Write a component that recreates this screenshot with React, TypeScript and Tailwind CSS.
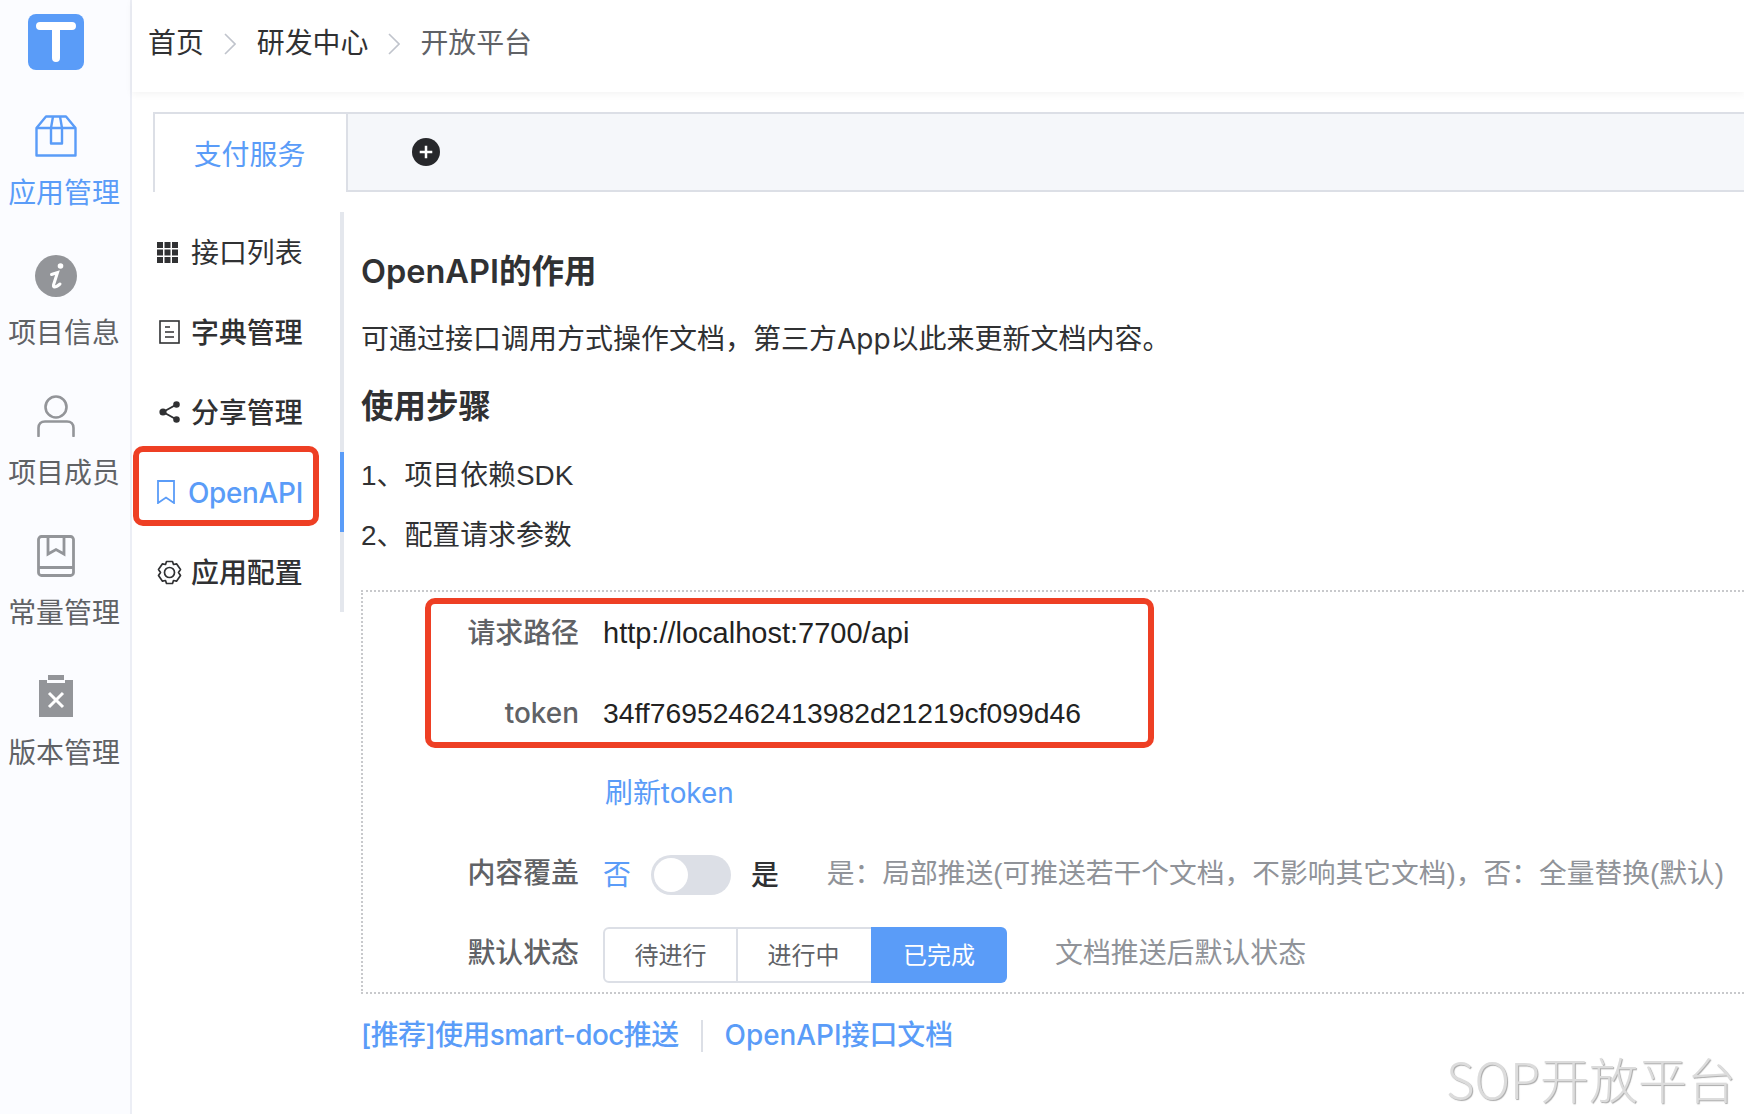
const font = '[font-family:"Inter","Noto_Sans_CJK_SC",sans-serif]';
const plainFont = '[font-family:"Liberation_Sans","Noto_Sans_CJK_SC",sans-serif]';

const BoxIcon = () => (
  <svg width="42" height="42" viewBox="0 0 42 42" fill="none" stroke="#5a9cf8" strokeWidth="2.4">
    <path d="M1.5 13 11 1.5H31L40.5 13V40.5H1.5Z" strokeLinejoin="round" />
    <path d="M1.5 13H40.5M18 1.5 16 13V28.5H27V13L25 1.5" strokeLinejoin="round" />
  </svg>
);

const InfoIcon = () => (
  <svg width="42" height="42" viewBox="0 0 42 42">
    <circle cx="21" cy="21" r="21" fill="#939599" />
    <circle cx="25.5" cy="11" r="2.8" fill="#fff" />
    <path d="M16.5 19.5 22.5 17.5 18.5 30C18 32.5 20 33 25 29" fill="none" stroke="#fff" strokeWidth="3" strokeLinecap="round" />
  </svg>
);

const UserIcon = () => (
  <svg width="38" height="42" viewBox="0 0 38 42" fill="none" stroke="#939599" strokeWidth="2.6">
    <circle cx="19" cy="12" r="10.5" />
    <path d="M1.5 41V33C1.5 29 4 26.5 8 26.5H30C34 26.5 36.5 29 36.5 33V41" strokeLinecap="round" />
  </svg>
);

const BookIcon = () => (
  <svg width="38" height="42" viewBox="0 0 38 42" fill="none" stroke="#939599" strokeWidth="2.8">
    <rect x="1.5" y="1.5" width="35" height="39" rx="3" />
    <path d="M1.5 32.5H36.5" />
    <path d="M11 1.5V19L19 14.5 27 19V1.5" />
  </svg>
);

const ClipIcon = () => (
  <svg width="34" height="42" viewBox="0 0 34 42">
    <path d="M0 5H8V8H26V5H34V42H0Z" fill="#939599" />
    <rect x="9" y="0" width="16" height="5" fill="#939599" />
    <path d="M10 18 24 32M24 18 10 32" stroke="#fff" strokeWidth="3" />
  </svg>
);

const navItems = [
  { label: '应用管理', icon: <BoxIcon />, active: true },
  { label: '项目信息', icon: <InfoIcon />, active: false },
  { label: '项目成员', icon: <UserIcon />, active: false },
  { label: '常量管理', icon: <BookIcon />, active: false },
  { label: '版本管理', icon: <ClipIcon />, active: false },
];

const GridIcon = () => (
  <svg className="-ml-[4px]" width="21" height="21" viewBox="0 0 21 21" fill="#303133">
    {[0, 7.5, 15].flatMap((y) => [0, 7.5, 15].map((x) => <rect key={`${x}-${y}`} x={x} y={y} width="6" height="6" />))}
  </svg>
);

const DocIcon = () => (
  <svg width="21" height="24" viewBox="0 0 21 24" fill="none" stroke="#303133" strokeWidth="1.6">
    <rect x="1" y="1" width="19" height="22" />
    <path d="M6 7H11M6 12H15M6 17H15" />
  </svg>
);

const ShareIcon = () => (
  <svg width="21" height="22" viewBox="0 0 21 22" fill="#303133" stroke="#303133" strokeWidth="2">
    <circle cx="4" cy="11" r="2.6" />
    <circle cx="17.5" cy="3.5" r="2.3" />
    <circle cx="17.5" cy="18.5" r="2.3" />
    <path d="M4 11 17.5 3.5M4 11 17.5 18.5" />
  </svg>
);

const BookmarkIcon = () => (
  <svg width="18" height="24" viewBox="0 0 18 24" fill="none" stroke="#5a9cf8" strokeWidth="1.8">
    <path d="M1 1H17V23L9 17.5 1 23Z" />
  </svg>
);

const GearIcon = () => (
  <svg width="25" height="25" viewBox="0 0 25 25" fill="none" stroke="#303133" strokeWidth="1.7">
    <path d="M9.5 1.5H15.5L16.5 4.5 19.5 3.8 23.5 9.5 21.5 12.5 23.5 15.5 19.5 21.2 16.5 20.5 15.5 23.5H9.5L8.5 20.5 5.5 21.2 1.5 15.5 3.5 12.5 1.5 9.5 5.5 3.8 8.5 4.5Z" strokeLinejoin="round" />
    <circle cx="12.5" cy="12.5" r="5" />
  </svg>
);

const Chevron = ({ className }: { className: string }) => (
  <svg className={className} width="12" height="22" viewBox="0 0 12 22" fill="none" stroke="#c0c4cc" strokeWidth="1.6">
    <path d="M1 1 11 11 1 21" />
  </svg>
);

function MenuRow({ label, icon, weight }: { label: string; icon: React.ReactNode; weight: string }) {
  return (
    <div className={`flex h-[80px] items-center text-[#303133] ${weight}`}>
      <span className="flex w-[38px] justify-center pl-[3px] pr-[9px]">{icon}</span>
      <span className="mt-[3px]">{label}</span>
    </div>
  );
}

function FormRow({ label, children }: { label: string; children: React.ReactNode }) {
  return (
    <div className="flex h-[80px] items-center">
      <div className="mt-[4px] w-[240px] pr-[24px] text-right font-medium text-[#606266]">{label}</div>
      {children}
    </div>
  );
}

export default function App() {
  return (
    <div className={`relative flex h-[1114px] w-[1744px] overflow-hidden bg-white text-[27.9px] ${font}`}>
      <aside className="flex h-full w-[132px] shrink-0 flex-col items-center border-r-[2px] border-[#eceef5] bg-[#fbfcff]">
        <div className="mr-[18px] mt-[14px] h-[56px] w-[56px]">
          <svg width="56" height="56" viewBox="0 0 56 56">
            <rect width="56" height="56" rx="8" fill="#5a9cf8" />
            <path d="M12 12H44M28 12V44" stroke="#fff" strokeWidth="8" strokeLinecap="round" />
          </svg>
        </div>
        <div className="mt-[27px] flex w-full flex-col">
          {navItems.map((item) => (
            <div key={item.label} className="flex h-[140px] flex-col items-center">
              <div className="mr-[19px] mt-[18px] flex h-[42px] items-center justify-center">{item.icon}</div>
              <div className={`mr-[2px] mt-[21px] whitespace-nowrap leading-[30px] ${item.active ? 'text-[#5a9cf8]' : 'text-[#606266]'}`}>
                {item.label}
              </div>
            </div>
          ))}
        </div>
      </aside>

      <div className="flex min-w-0 flex-1 flex-col">
        <header className="flex h-[92px] shrink-0 items-center pb-[4px] pl-[16px] text-[#303133] shadow-[0_2px_8px_rgba(0,0,0,0.05)]">
          <span>首页</span>
          <Chevron className="mx-[20px]" />
          <span className="ml-[1px]">研发中心</span>
          <Chevron className="mx-[20px]" />
          <span className="text-[#606266]">开放平台</span>
        </header>

        <div className="ml-[21px] mt-[20px] flex h-[80px] shrink-0 border-y-[2px] border-[#dcdfe6] bg-[#f5f7fa]">
          <div className="-mb-[2px] flex w-[195px] items-center justify-center border-x-[2px] border-[#dcdfe6] bg-white pr-[2px] text-[#5a9cf8]">
            <span className="mt-[5px]">支付服务</span>
          </div>
          <div className="ml-[64px] flex items-center">
            <svg className="mb-[1px]" width="28" height="28" viewBox="0 0 29 29">
              <circle cx="14.5" cy="14.5" r="14.5" fill="#27282b" />
              <path d="M8 14.5H21M14.5 8V21" stroke="#fff" strokeWidth="2.6" />
            </svg>
          </div>
        </div>

        <div className="ml-[21px] flex flex-1">
          <div className="mt-[20px] h-[400px] w-[191px] shrink-0 border-r-[4px] border-[#e4e7ed]">
            <MenuRow label="接口列表" weight="font-normal" icon={<GridIcon />} />
            <MenuRow label="字典管理" weight="font-medium" icon={<DocIcon />} />
            <MenuRow label="分享管理" weight="font-medium" icon={<ShareIcon />} />
            <div className="relative -mr-[4px] flex h-[80px] items-center border-r-[4px] border-[#5a9cf8] font-medium text-[#5a9cf8]">
              <span className="flex w-[35px] justify-center pl-[1px] pr-[11px]"><BookmarkIcon /></span>
              <span className="mt-[3px] tracking-[-0.3px]">OpenAPI</span>
              <div className="absolute left-[-20px] top-[-6px] h-[80px] w-[186px] rounded-[10px] border-[6px] border-[#ee3f24]" />
            </div>
            <MenuRow label="应用配置" weight="font-medium" icon={<GearIcon />} />
          </div>

          <main className="ml-[17px] min-w-0 flex-1 pt-[19px] text-[#303133]">
            <h2 className="mt-[38px] text-[32.5px] leading-[45px] font-semibold">OpenAPI的作用</h2>
            <p className="mt-[25px] whitespace-nowrap leading-[40px] text-[28px]">可通过接口调用方式操作文档，第三方App以此来更新文档内容。</p>
            <h2 className="mt-[25px] text-[32.5px] leading-[45px] font-semibold">使用步骤</h2>
            <p className={`mt-[27px] leading-[40px] ${plainFont}`}>1、项目依赖SDK</p>
            <p className={`mt-[20px] leading-[40px] ${plainFont}`}>2、配置请求参数</p>

            <div className="relative mt-[34px] h-[404px] border-y-[2px] border-l-[2px] border-dotted border-[#c8c9cc]">
              <FormRow label="请求路径">
                <span className={`mt-[4px] text-[29px] text-[#222] ${plainFont}`}>http://localhost:7700/api</span>
              </FormRow>
              <FormRow label="token">
                <span className={`mt-[3px] text-[28.3px] text-[#222] ${plainFont}`}>34ff76952462413982d21219cf099d46</span>
              </FormRow>
              <FormRow label="">
                <span className="mt-[4px] pl-[2px] text-[#5a9cf8]">刷新token</span>
              </FormRow>
              <FormRow label="内容覆盖">
                <span className="mt-[8px] text-[#5a9cf8]">否</span>
                <span className="ml-[20px] mt-[6px] flex h-[40px] w-[80px] items-center rounded-full bg-[#dcdfe6] pl-[3px]">
                  <span className="h-[34px] w-[34px] rounded-full bg-white" />
                </span>
                <span className="ml-[20px] mt-[8px] font-medium text-[#303133]">是</span>
                <span className={`ml-[48px] mt-[4px] whitespace-nowrap text-[27.75px] text-[#909399] ${plainFont}`}>是：局部推送(可推送若干个文档，不影响其它文档)，否：全量替换(默认)</span>
              </FormRow>
              <FormRow label="默认状态">
                <div className="mt-[6px] flex h-[56px] text-[24px]">
                  <span className="flex w-[135px] items-center justify-center rounded-l-[6px] border-[2px] border-[#dcdfe6] pt-[2px] text-[#606266]">待进行</span>
                  <span className="-ml-[2px] flex w-[135px] items-center justify-center border-y-[2px] border-[#dcdfe6] pt-[2px] text-[#606266]">进行中</span>
                  <span className="flex w-[136px] items-center justify-center rounded-r-[6px] bg-[#5a9cf8] pt-[2px] text-white">已完成</span>
                </div>
                <span className="ml-[48px] mt-[4px] whitespace-nowrap text-[#909399]">文档推送后默认状态</span>
              </FormRow>
              <div className="absolute left-[62px] top-[6px] h-[150px] w-[729px] rounded-[10px] border-[6px] border-[#ee3f24]" />
            </div>

            <div className="mt-[21px] flex items-center font-medium text-[#5a9cf8]">
              <span className="tracking-[-0.55px]">[推荐]使用smart-doc推送</span>
              <span className="mx-[22px] h-[32px] w-[2px] bg-[#dcdfe6]" />
              <span>OpenAPI接口文档</span>
            </div>
          </main>
        </div>
      </div>

      <div className="absolute right-[8px] top-[1048px] whitespace-nowrap text-[49px] leading-[60px] font-light text-[#dcdcdc] [font-family:'Noto_Sans_CJK_SC',sans-serif] [text-shadow:1px_1px_1px_#aaa]">
        SOP开放平台
      </div>
    </div>
  );
}
